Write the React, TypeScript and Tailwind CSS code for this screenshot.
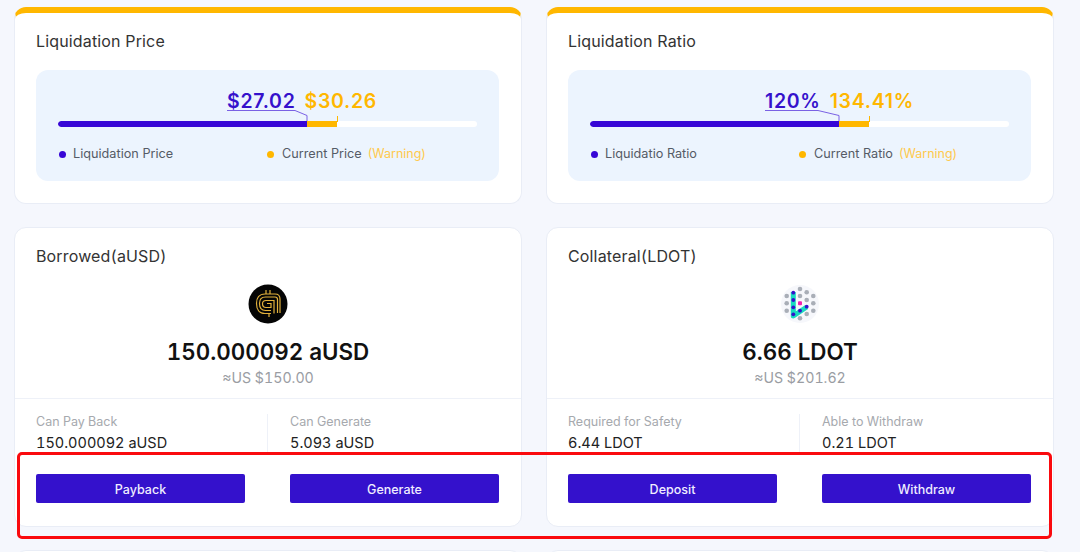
const font = { fontFamily: 'Inter, "Liberation Sans", sans-serif' };

function Gauge({ title, a, b, la, lb, line, indent }: { title: string; a: string; b: string; la: string; lb: string; line: string; indent: string }) {
  return (
    <section className="h-[197px] rounded-xl overflow-hidden bg-white border-x border-b border-[#e9edf6] border-t-[6px] border-t-[#ffb700] px-[21px]">
      <h2 className="mt-[16px] h-[24px] text-[16px] leading-[24px] tracking-[0.15px] font-normal text-[#333]">{title}</h2>
      <div className="mt-[17px] h-[111px] w-[463px] rounded-xl bg-[#ecf4fe] px-[22px] pt-[19px]">
        <div className="relative h-[38px]">
          <div className={`flex gap-[9px] text-[19.5px] leading-[24px] font-semibold tracking-[0.7px] ${indent}`}>
            <span className="text-[#3511cc]">{a}</span>
            <span className="text-[#ffb700]">{b}</span>
          </div>
          <svg className="absolute left-0 top-[20px]" width="290" height="14" viewBox="0 0 290 14" fill="none">
            <path d={line} stroke="#7a61e4" strokeWidth="1" />
            <path d="M279.5 7V13" stroke="#ffb700" strokeWidth="1" />
          </svg>
        </div>
        <div className="mt-[-6px] flex h-[6px] w-[419px] overflow-hidden rounded-full bg-white">
          <div className="w-[249px] rounded-l-full bg-[#3706d6]" />
          <div className="w-[30px] bg-[#ffb700]" />
        </div>
        <div className="mt-[18px] flex text-[12.7px] leading-[18px] text-[#555b66]">
          <div className="flex w-[209px] items-center gap-[7px] pl-px">
            <i className="h-[7px] w-[7px] rounded-full bg-[#3706d6]" />
            <span>{la}</span>
          </div>
          <div className="flex items-center">
            <i className="mr-[8px] h-[7px] w-[7px] rounded-full bg-[#ffb700]" />
            <span>{lb}</span>
            <span className="ml-[6px] text-[12.5px] text-[#ffc94d]">(Warning)</span>
          </div>
        </div>
      </div>
    </section>
  );
}

function AusdLogo() {
  return (
    <svg width="40" height="40" viewBox="0 0 40 40" fill="none">
      <circle cx="20" cy="20" r="19.5" fill="#050505" />
      <g stroke="#e2b13c" strokeWidth="1.2" fill="none">
        <path d="M32 29V15C32 12 30 10 27 10H17C11 10 8.5 14 8.5 19.5C8.5 25.5 11.5 29.5 17 29.5H23" />
        <path d="M29.5 29V15.5C29.5 14 28.5 13 27 13H17.5C13.5 13 11.5 15.5 11.5 19.5C11.5 23.5 13.5 26.5 17.5 26.5H23" />
        <path d="M26 29.5V16.5H18C15.5 16.5 14.5 18 14.5 19.8C14.5 22 15.7 23.5 18 23.5H23V19.5H19" />
        <path d="M18 6V10M22 6V10M21 29.5V33" />
      </g>
    </svg>
  );
}

function LdotLogo() {
  const greys: [number, number][] = [
    [20, 5], [26.7, 8.3], [33.3, 12], [20, 12], [6.7, 12], [26.7, 16], [33.3, 19.3], [6.7, 19.3],
    [33.3, 26.7], [6.7, 26.7], [26.7, 30], [20, 34.3],
  ];
  const blues: [number, number][] = [
    [13.3, 8.7], [13.3, 16], [13.3, 23.3], [13.3, 30.3], [20, 26.7], [26.7, 22.7],
  ];
  return (
    <svg width="40" height="40" viewBox="0 0 40 40" fill="none">
      <circle cx="20" cy="20" r="19" fill="#f6f7fb" />
      {greys.map(([x, y]) => (
        <circle key={`${x}-${y}`} cx={x} cy={y} r="2.3" fill="#a9aeb7" />
      ))}
      <path d="M13.3 8V32L26.7 23" stroke="#18dcc0" strokeWidth="5" strokeLinejoin="round" />
      {blues.map(([x, y]) => (
        <circle key={`${x}-${y}`} cx={x} cy={y} r="1.9" fill="#3511cc" />
      ))}
      <rect x="18" y="17.3" width="4" height="4" rx="1" fill="#f01fae" />
    </svg>
  );
}

function Balance(props: {
  title: string;
  logo: React.ReactNode;
  amount: string;
  usd: string;
  l1: string;
  v1: string;
  l2: string;
  v2: string;
  b1: string;
  b2: string;
}) {
  return (
    <section className="h-[300px] rounded-xl bg-white border border-[#e9edf6] [font-variant-numeric:tabular-nums]">
      <h2 className="mx-[21px] mt-[16px] h-[24px] text-[16px] leading-[24px] tracking-[0.15px] font-normal text-[#333]">{props.title}</h2>
      <div className="mt-[16px] flex h-[40px] justify-center">{props.logo}</div>
      <div className="mt-[14px] text-center text-[22.4px] leading-[28px] font-semibold text-[#111]">{props.amount}</div>
      <div className="mt-[2px] text-center text-[14.2px] leading-[20px] text-[#9a9da3]">{props.usd}</div>
      <div className="mt-[10px] flex h-[56px] border-t border-[#eef1f8] pt-[15px]">
        <div className="w-[253px] border-r border-[#eef1f8] pl-[21px]">
          <div className="text-[12.5px] leading-[16px] text-[#a6a9ae]">{props.l1}</div>
          <div className="mt-[4px] text-[14.5px] leading-[18px] text-[#222]">{props.v1}</div>
        </div>
        <div className="pl-[22px]">
          <div className="text-[12.5px] leading-[16px] text-[#a6a9ae]">{props.l2}</div>
          <div className="mt-[4px] text-[14.5px] leading-[18px] text-[#222]">{props.v2}</div>
        </div>
      </div>
      <div className="mt-[20px] flex w-[484px] justify-between pl-[21px]">
        <button className="h-[29px] w-[209px] rounded-[2px] bg-[#3411cc] pt-[4px] text-[12.5px] font-medium text-[#f0edff]">{props.b1}</button>
        <button className="h-[29px] w-[209px] rounded-[2px] bg-[#3411cc] pt-[4px] text-[12.5px] font-medium text-[#f0edff]">{props.b2}</button>
      </div>
    </section>
  );
}

export default function App() {
  return (
    <div style={font} className="relative h-[552px] w-[1080px] overflow-hidden bg-[#f5f7fd] pl-[14px] pt-[7px]">
      <div className="grid w-[1040px] grid-cols-[508px_508px] gap-x-[24px] gap-y-[23px]">
        <Gauge title="Liquidation Price" a="$27.02" b="$30.26" la="Liquidation Price" lb="Current Price" indent="pl-[169px]" line="M169 1.5H237L249 6.5V12" />
        <Gauge title="Liquidation Ratio" a="120%" b="134.41%" la="Liquidatio Ratio" lb="Current Ratio" indent="pl-[175px]" line="M175 1.5H228L249 6.5V12" />
        <Balance
          title="Borrowed(aUSD)"
          logo={<AusdLogo />}
          amount="150.000092 aUSD"
          usd="≈US $150.00"
          l1="Can Pay Back"
          v1="150.000092 aUSD"
          l2="Can Generate"
          v2="5.093 aUSD"
          b1="Payback"
          b2="Generate"
        />
        <Balance
          title="Collateral(LDOT)"
          logo={<LdotLogo />}
          amount="6.66 LDOT"
          usd="≈US $201.62"
          l1="Required for Safety"
          v1="6.44 LDOT"
          l2="Able to Withdraw"
          v2="0.21 LDOT"
          b1="Deposit"
          b2="Withdraw"
        />
        <div className="h-[40px] rounded-t-xl border border-[#e9edf6] bg-white" />
        <div className="h-[40px] rounded-t-xl border border-[#e9edf6] bg-white" />
      </div>
      <div className="absolute left-[17px] top-[452px] h-[87px] w-[1035px] rounded-[5px] border-[3px] border-[#fa0a0e]" />
    </div>
  );
}
